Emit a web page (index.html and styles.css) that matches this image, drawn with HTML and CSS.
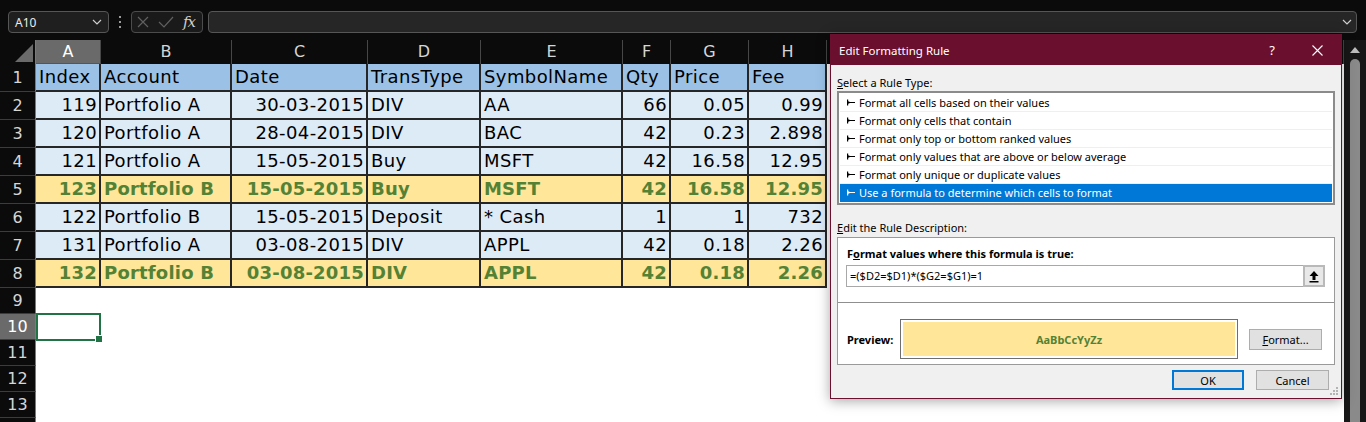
FILE: index.html
```html
<!DOCTYPE html>
<html>
<head>
<meta charset="utf-8">
<title>Edit Formatting Rule</title>
<link rel="stylesheet" href="styles.css">
</head>
<body>
<div class="topbar">
  <div class="namebox"><span>A10</span><svg class="chev" width="10" height="6" viewBox="0 0 10 6"><path d="M1 1l4 4 4-4" fill="none" stroke="#cfcfcf" stroke-width="1.2"/></svg></div>
  <div class="dots"><svg width="4" height="12" viewBox="0 0 4 12"><rect x="1" y="0" width="2" height="2" fill="#9a9a9a"/><rect x="1" y="5" width="2" height="2" fill="#9a9a9a"/><rect x="1" y="10" width="2" height="2" fill="#9a9a9a"/></svg></div>
  <div class="fxgroup">
    <svg width="12" height="12" viewBox="0 0 12 12"><path d="M1 1l10 10M11 1L1 11" stroke="#606060" stroke-width="1.2"/></svg>
    <svg width="16" height="12" viewBox="0 0 16 12"><path d="M1 6l5 5L15 1" fill="none" stroke="#606060" stroke-width="1.2"/></svg>
    <span class="fx">fx</span>
  </div>
  <div class="formula"><svg class="chev" width="10" height="6" viewBox="0 0 10 6"><path d="M1 1l4 4 4-4" fill="none" stroke="#cfcfcf" stroke-width="1.2"/></svg></div>
</div>

<div class="main">
  <div class="sheet">
    <div class="row colhead">
      <div class="corner"><svg width="36" height="24" viewBox="0 0 36 24"><polygon points="33,4 33,22 15,22" fill="#6a6a6a"/></svg></div>
      <div class="ch sel">A</div><div class="ch">B</div><div class="ch">C</div><div class="ch">D</div><div class="ch">E</div><div class="ch">F</div><div class="ch">G</div><div class="ch">H</div><div class="ch">I</div>
    </div>

    <div class="row">
      <div class="rh">1</div>
      <div class="c hd">Index</div><div class="c hd">Account</div><div class="c hd">Date</div><div class="c hd">TransType</div><div class="c hd">SymbolName</div><div class="c hd">Qty</div><div class="c hd">Price</div><div class="c hd">Fee</div><div class="blank"></div>
    </div>
    <div class="row">
      <div class="rh">2</div>
      <div class="c r">119</div><div class="c">Portfolio A</div><div class="c r">30-03-2015</div><div class="c">DIV</div><div class="c">AA</div><div class="c r">66</div><div class="c r">0.05</div><div class="c r">0.99</div><div class="blank"></div>
    </div>
    <div class="row">
      <div class="rh">3</div>
      <div class="c r">120</div><div class="c">Portfolio A</div><div class="c r">28-04-2015</div><div class="c">DIV</div><div class="c">BAC</div><div class="c r">42</div><div class="c r">0.23</div><div class="c r">2.898</div><div class="blank"></div>
    </div>
    <div class="row">
      <div class="rh">4</div>
      <div class="c r">121</div><div class="c">Portfolio A</div><div class="c r">15-05-2015</div><div class="c">Buy</div><div class="c">MSFT</div><div class="c r">42</div><div class="c r">16.58</div><div class="c r">12.95</div><div class="blank"></div>
    </div>
    <div class="row hl">
      <div class="rh">5</div>
      <div class="c r">123</div><div class="c">Portfolio B</div><div class="c r">15-05-2015</div><div class="c">Buy</div><div class="c">MSFT</div><div class="c r">42</div><div class="c r">16.58</div><div class="c r">12.95</div><div class="blank"></div>
    </div>
    <div class="row">
      <div class="rh">6</div>
      <div class="c r">122</div><div class="c">Portfolio B</div><div class="c r">15-05-2015</div><div class="c">Deposit</div><div class="c">* Cash</div><div class="c r">1</div><div class="c r">1</div><div class="c r">732</div><div class="blank"></div>
    </div>
    <div class="row">
      <div class="rh">7</div>
      <div class="c r">131</div><div class="c">Portfolio A</div><div class="c r">03-08-2015</div><div class="c">DIV</div><div class="c">APPL</div><div class="c r">42</div><div class="c r">0.18</div><div class="c r">2.26</div><div class="blank"></div>
    </div>
    <div class="row hl">
      <div class="rh">8</div>
      <div class="c r">132</div><div class="c">Portfolio B</div><div class="c r">03-08-2015</div><div class="c">DIV</div><div class="c">APPL</div><div class="c r">42</div><div class="c r">0.18</div><div class="c r">2.26</div><div class="blank"></div>
    </div>

    <div class="row short"><div class="rh">9</div><div class="blank full"></div></div>
    <div class="row short"><div class="rh selrow">10</div><div class="active"></div><div class="blank rest"></div></div>
    <div class="row short"><div class="rh">11</div><div class="blank full"></div></div>
    <div class="row short"><div class="rh">12</div><div class="blank full"></div></div>
    <div class="row short"><div class="rh">13</div><div class="blank full"></div></div>
    <div class="row short"><div class="rh"></div><div class="blank full"></div></div>
  </div>
  <div class="vscroll">
    <svg width="22" height="16" viewBox="0 0 22 16"><polygon points="11,5 16,11 6,11" fill="#bdbdbd"/></svg>
    <div class="thumb"></div>
  </div>
</div>

<div class="dialog">
  <div class="titlebar">
    <span class="title">Edit Formatting Rule</span>
    <span class="help">?</span>
    <svg class="close" width="11" height="11" viewBox="0 0 11 11"><path d="M0.5 0.5l10 10M10.5 0.5l-10 10" stroke="#ffffff" stroke-width="1.1"/></svg>
  </div>
  <div class="dbody">
    <div class="lbl"><u>S</u>elect a Rule Type:</div>
    <ul class="rules">
      <li><svg class="ri" width="8" height="7" viewBox="0 0 8 7"><path d="M0 0.5h1.2v2.4h6.8v1.2h-6.8v2.4h-1.2z M1.2 2.2l1.8 0.7v1.2l-1.8 0.7z" fill="currentColor"/></svg>Format all cells based on their values</li>
      <li><svg class="ri" width="8" height="7" viewBox="0 0 8 7"><path d="M0 0.5h1.2v2.4h6.8v1.2h-6.8v2.4h-1.2z M1.2 2.2l1.8 0.7v1.2l-1.8 0.7z" fill="currentColor"/></svg>Format only cells that contain</li>
      <li><svg class="ri" width="8" height="7" viewBox="0 0 8 7"><path d="M0 0.5h1.2v2.4h6.8v1.2h-6.8v2.4h-1.2z M1.2 2.2l1.8 0.7v1.2l-1.8 0.7z" fill="currentColor"/></svg>Format only top or bottom ranked values</li>
      <li><svg class="ri" width="8" height="7" viewBox="0 0 8 7"><path d="M0 0.5h1.2v2.4h6.8v1.2h-6.8v2.4h-1.2z M1.2 2.2l1.8 0.7v1.2l-1.8 0.7z" fill="currentColor"/></svg>Format only values that are above or below average</li>
      <li><svg class="ri" width="8" height="7" viewBox="0 0 8 7"><path d="M0 0.5h1.2v2.4h6.8v1.2h-6.8v2.4h-1.2z M1.2 2.2l1.8 0.7v1.2l-1.8 0.7z" fill="currentColor"/></svg>Format only unique or duplicate values</li>
      <li class="on"><svg class="ri" width="8" height="7" viewBox="0 0 8 7"><path d="M0 0.5h1.2v2.4h6.8v1.2h-6.8v2.4h-1.2z M1.2 2.2l1.8 0.7v1.2l-1.8 0.7z" fill="currentColor"/></svg>Use a formula to determine which cells to format</li>
    </ul>
    <div class="lbl lbl2"><u>E</u>dit the Rule Description:</div>
    <div class="desc">
      <div class="blbl">F<u>o</u>rmat values where this formula is true:</div>
      <div class="finput">
        <div class="ftext">=($D2=$D1)*($G2=$G1)=1</div>
        <div class="collapse"><svg width="12" height="13" viewBox="0 0 12 13"><path d="M6 1L10.5 6H7.5V10H4.5V6H1.5Z" fill="#000"/><rect x="1.5" y="11" width="9" height="1.5" fill="#000"/></svg></div>
      </div>
      <div class="sep"></div>
      <div class="prevrow">
        <span class="blbl plbl">Preview:</span>
        <div class="preview"><div class="pfill">AaBbCcYyZz</div></div>
        <div class="btn fmt"><u>F</u>ormat...</div>
      </div>
    </div>
    <div class="actions">
      <div class="btn ok">OK</div>
      <div class="btn cancel">Cancel</div>
    </div>
  </div>
  <svg class="grip" width="8" height="8" viewBox="0 0 8 8"><rect x="6" y="0" width="2" height="2" fill="#b4b4b4"/><rect x="3" y="3" width="2" height="2" fill="#b4b4b4"/><rect x="6" y="3" width="2" height="2" fill="#b4b4b4"/><rect x="0" y="6" width="2" height="2" fill="#b4b4b4"/><rect x="3" y="6" width="2" height="2" fill="#b4b4b4"/><rect x="6" y="6" width="2" height="2" fill="#b4b4b4"/></svg>
</div>
</body>
</html>
```

FILE: styles.css
```css
* { box-sizing: border-box; }
html, body { margin: 0; padding: 0; }
body {
  width: 1366px;
  height: 422px;
  overflow: hidden;
  background: #0b0b0b;
  font-family: "DejaVu Sans", sans-serif;
  position: relative;
}

/* ---------- formula bar ---------- */
.topbar {
  height: 40px;
  display: flex;
  align-items: flex-start;
  padding: 11px 0 0 8px;
  background: #0b0b0b;
}
.namebox {
  width: 101px;
  height: 22px;
  border: 1px solid #565656;
  border-radius: 4px;
  background: #1f1f1f;
  display: flex;
  align-items: center;
  justify-content: space-between;
  padding: 0 6px 0 6px;
  font-family: "Noto Sans", sans-serif;
  font-size: 12px;
  color: #ececec;
}
.dots {
  width: 22px;
  height: 22px;
  display: flex;
  align-items: center;
  justify-content: center;
}
.fxgroup {
  width: 72px;
  height: 22px;
  border: 1px solid #4c4c4c;
  border-radius: 4px;
  background: #1a1a1a;
  display: flex;
  align-items: center;
  gap: 9px;
  padding-left: 5px;
}
.fx {
  font-family: "DejaVu Serif", serif;
  font-style: italic;
  font-size: 15px;
  color: #cfcfcf;
  line-height: 20px;
  letter-spacing: -1px;
}
.formula {
  margin-left: 5px;
  width: 1149px;
  height: 22px;
  border: 1px solid #565656;
  border-radius: 4px;
  background: #262626;
  display: flex;
  align-items: center;
  justify-content: flex-end;
  padding-right: 4px;
}

/* ---------- sheet ---------- */
.main {
  display: flex;
  height: 382px;
}
.sheet {
  width: 1344px;
  background: #ffffff;
}
.row {
  display: grid;
  grid-template-columns: 36px 65px 131px 136px 113px 142px 48px 78px 78px 1fr;
  height: 28px;
  font-size: 18px;
  letter-spacing: 0.4px;
  color: #000;
}
.row.short { height: 26px; }
.row.colhead { height: 24px; background: #0b0b0b; }
.corner {
  background: #0b0b0b;
  border-right: 1px solid #7a7a7a;
  border-bottom: 1px solid #6a6a6a;
  line-height: 0;
}
.ch {
  background: #0b0b0b;
  color: #d6d6d6;
  font-size: 16px;
  letter-spacing: 0;
  text-align: center;
  line-height: 23px;
  border-right: 1px solid #474747;
  border-bottom: 1px solid #6a6a6a;
}
.ch.sel {
  background: #6a6a6a;
  color: #ffffff;
  border-bottom: 2px solid #217346;
}
.rh {
  background: #0b0b0b;
  color: #d6d6d6;
  font-size: 16px;
  letter-spacing: 0;
  border-right: 1px solid #7a7a7a;
  border-bottom: 1px solid #3c3c3c;
  display: flex;
  align-items: center;
  justify-content: center;
}
.rh.selrow { background: #6a6a6a; color: #ffffff; }
.c {
  background: #ddebf7;
  border-right: 2px solid #262626;
  border-bottom: 2px solid #262626;
  line-height: 26px;
  padding: 0 2px 0 3px;
  white-space: nowrap;
  overflow: hidden;
}
.c.r { text-align: right; }
.c.hd { background: #9bc2e6; }
.row.hl .c {
  background: #ffe699;
  color: #548235;
  font-weight: bold;
  letter-spacing: 0.2px;
}
.blank { background: #ffffff; }
.blank.full { grid-column: 2 / -1; }
.blank.rest { grid-column: 3 / -1; }
.active {
  position: relative;
  border: 2px solid #217346;
  background: #ffffff;
  margin: -1px 0 -1px 0;
}
.active::after {
  content: "";
  position: absolute;
  right: -4px;
  bottom: -4px;
  width: 6px;
  height: 6px;
  background: #217346;
  border: 1px solid #ffffff;
}

.vscroll {
  width: 22px;
  background: #171717;
  display: flex;
  flex-direction: column;
  align-items: center;
  padding-top: 2px;
}
.thumb {
  width: 10px;
  flex: 1;
  margin-top: 1px;
  background: #8a8a8a;
  border-radius: 5px 5px 0 0;
}

/* ---------- dialog ---------- */
.dialog {
  position: absolute;
  left: 830px;
  top: 34px;
  width: 512px;
  height: 365px;
  background: #f0f0f0;
  border: 1px solid #6c1030;
  box-shadow: 0 2px 12px rgba(0, 0, 0, 0.35);
  font-family: "Noto Sans", sans-serif;
  font-size: 11px;
  color: #000;
}
.titlebar {
  height: 30px;
  background: #6a0f2e;
  display: flex;
  align-items: center;
  padding-left: 8px;
  color: #ffffff;
}
.title { font-size: 11.5px; }
.help {
  margin-left: auto;
  width: 16px;
  text-align: center;
  font-size: 13px;
  margin-right: 32px;
}
.close { margin-right: 18px; }
.dbody { padding: 0 6px; }
.lbl {
  margin-top: 10px;
  line-height: 15px;
  height: 15px;
}
.lbl2 { margin-top: 15px; }
.rules {
  list-style: none;
  margin: 1px 0 0 0;
  padding: 1px;
  height: 114px;
  border: 2px solid #8b8b8b;
  background: #ffffff;
}
.rules li {
  height: 18px;
  line-height: 17px;
  border-bottom: 1px solid #efefef;
  padding-left: 7px;
  display: flex;
  align-items: center;
  color: #000;
}
.rules li .ri { margin-right: 4px; flex: none; }
.rules li.on {
  background: #0078d7;
  color: #ffffff;
  border-bottom-color: #0078d7;
}
.desc {
  margin-top: 2px;
  height: 128px;
  border: 1px solid #9a9a9a;
  background: #ffffff;
  padding: 0 9px 0 8px;
}
.blbl {
  font-weight: bold;
  margin-left: 1px;
  margin-top: 8px;
  line-height: 15px;
}
.finput {
  margin-top: 4px;
  height: 22px;
  display: flex;
}
.ftext {
  flex: 1;
  border: 1px solid #a8a8a8;
  border-right: none;
  line-height: 20px;
  padding-left: 3px;
}
.collapse {
  width: 22px;
  height: 22px;
  border: 2px solid #b9b9b9;
  background: #e8e8e8;
  display: flex;
  align-items: center;
  justify-content: center;
}
.sep {
  margin: 15px -9px 0 -8px;
  height: 1px;
  background: #8f8f8f;
}
.prevrow {
  margin-top: 16px;
  display: flex;
  align-items: center;
  height: 40px;
}
.plbl { margin-top: 0; width: 53px; }
.preview {
  width: 338px;
  height: 40px;
  border: 1px solid #6f6f6f;
  background: #ffffff;
  padding: 2px;
}
.pfill {
  height: 100%;
  background: #ffe699;
  color: #548235;
  font-weight: bold;
  display: flex;
  align-items: center;
  justify-content: center;
}
.btn {
  height: 21px;
  background: #e1e1e1;
  border: 1px solid #adadad;
  display: flex;
  align-items: center;
  justify-content: center;
}
.fmt { width: 73px; margin-left: 11px; }
.actions {
  display: flex;
  justify-content: flex-end;
  gap: 12px;
  margin-top: 5px;
  padding-right: 6px;
}
.ok { width: 72px; height: 20px; border: 2px solid #0078d7; }
.cancel { width: 73px; height: 20px; }
.grip {
  position: absolute;
  right: 3px;
  bottom: 3px;
}
```
